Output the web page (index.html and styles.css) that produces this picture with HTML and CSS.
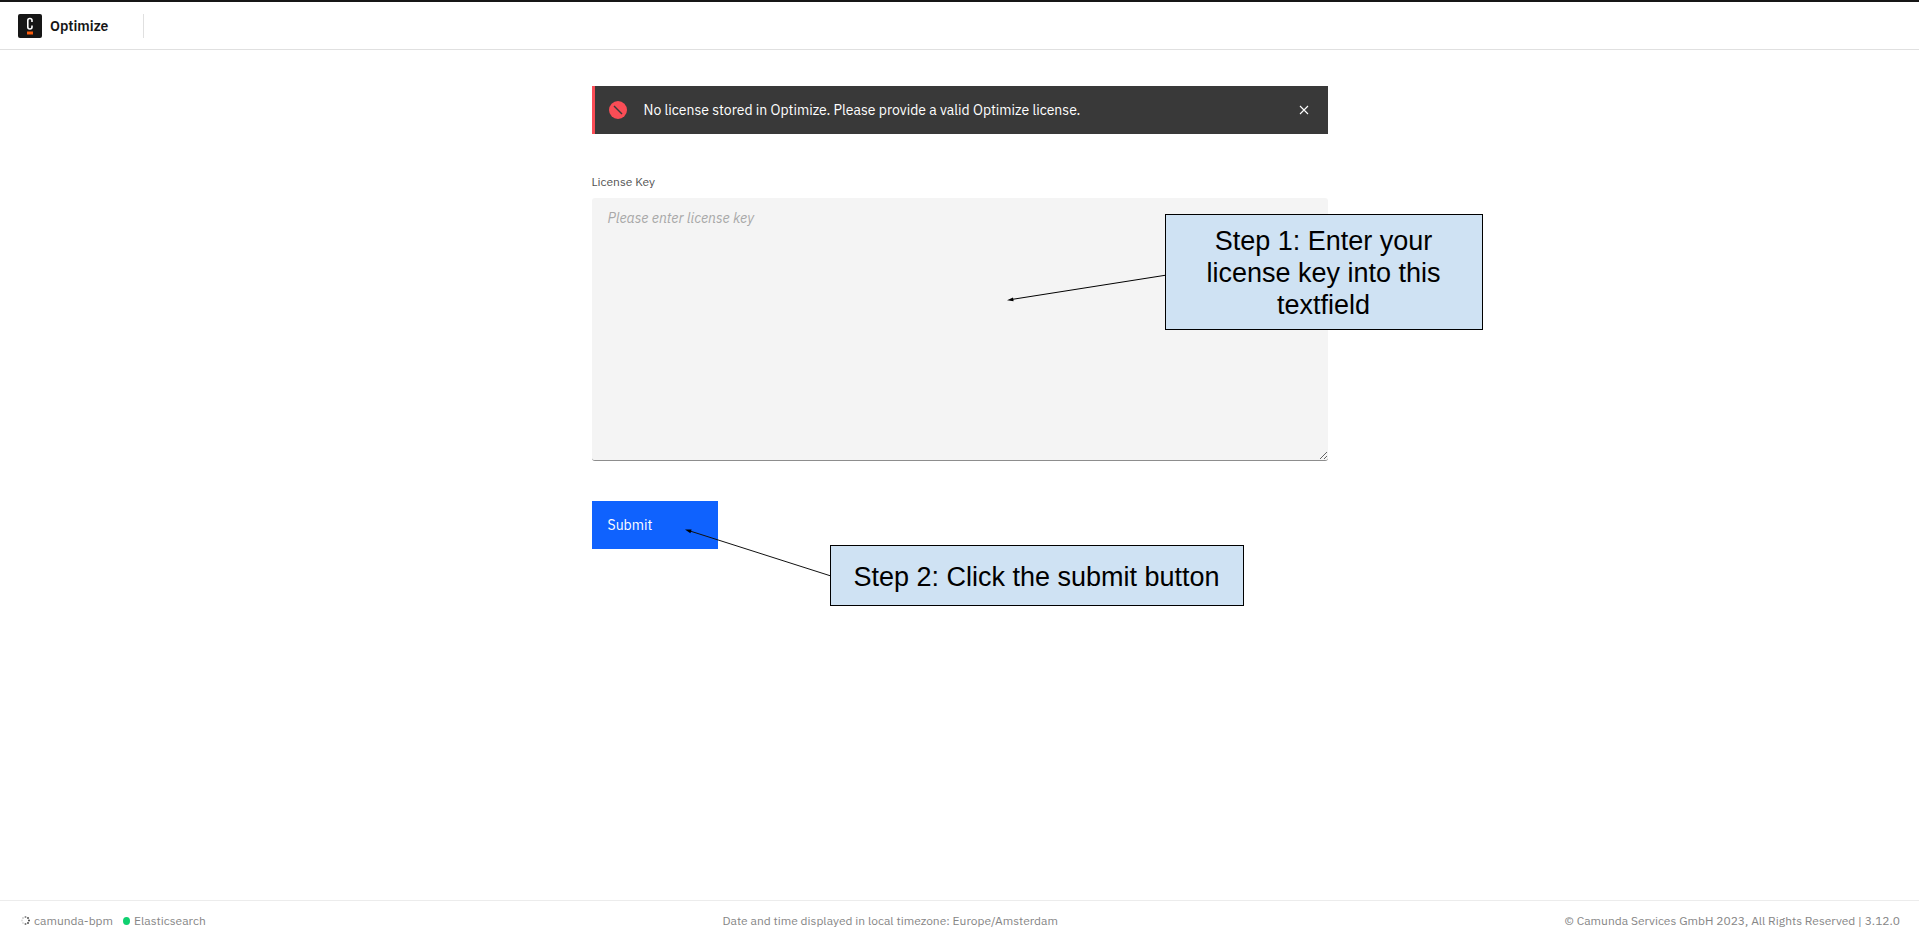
FILE: index.html
```html
<!DOCTYPE html>
<html lang="en">
<head>
<meta charset="utf-8">
<meta name="viewport" content="width=device-width, initial-scale=1">
<title>Optimize</title>
<link rel="stylesheet" href="styles.css">
</head>
<body>
<header class="header">
  <a class="brand" href="#">
    <svg class="brand-logo" viewBox="0 0 24 24" aria-hidden="true">
      <rect width="24" height="24" rx="2" fill="#161616"/>
      <path d="M14 8V6.500a2 2 0 0 0-2-2h-.2a2 2 0 0 0-2 2v6.500a2 2 0 0 0 2 2h.2a2 2 0 0 0 2-2v-1.500" fill="none" stroke="#fff" stroke-width="1.600"/>
      <rect x="9" y="17.500" width="6" height="3" fill="#fc5d0d"/>
    </svg>
    <span>Optimize</span>
  </a>
</header>

<main class="main">
  <div class="license">
    <div class="notification" role="alert">
      <svg class="notification-icon" viewBox="0 0 18 18" aria-hidden="true">
        <circle cx="9" cy="9" r="9" fill="#fa4d56"/>
        <path d="M5 5l8 8" stroke="#393939" stroke-width="1.400"/>
      </svg>
      <p class="notification-text">No license stored in Optimize. Please provide a valid Optimize license.</p>
      <button class="notification-close" type="button" aria-label="Close">
        <svg class="close-icon" viewBox="0 0 10 10" aria-hidden="true">
          <path d="M1 1l8 8M9 1l-8 8" stroke="#fff" stroke-width="1.100"/>
        </svg>
      </button>
    </div>
    <form class="form">
      <label class="label" for="license-key">License Key</label>
      <textarea class="key" id="license-key" placeholder="Please enter license key"></textarea>
      <button class="submit" type="submit">Submit</button>
    </form>

    <svg class="arrow arrow-key" viewBox="0 0 160 28" aria-hidden="true">
      <path d="M160 1L5 25.400" stroke="#000" fill="none"/>
      <path d="M0 26.200L6 23.400L6.600 27.200Z"/>
    </svg>
    <div class="callout callout-key">Step 1: Enter your license key into this textfield</div>
    <svg class="arrow arrow-submit" viewBox="0 0 146 48" aria-hidden="true">
      <path d="M146 47L5 2" stroke="#111" fill="none"/>
      <path d="M0 .400L6.600 .400L5.400 4.200Z"/>
    </svg>
    <div class="callout callout-submit">Step 2: Click the submit button</div>
  </div>
</main>

<footer class="footer">
  <ul class="status">
    <li class="status-item">
      <svg class="spinner" viewBox="0 0 9 9" aria-hidden="true">
        <circle cx="4.500" cy="1" r="1" fill="#888"/>
        <circle cx="7" cy="2" r="1" fill="#555"/>
        <circle cx="8" cy="4.500" r="1" fill="#444"/>
        <circle cx="7" cy="7" r="1" fill="#555"/>
        <circle cx="4.500" cy="8" r="1" fill="#777"/>
        <circle cx="2" cy="7" r="1" fill="#ddd"/>
        <circle cx="1" cy="4.500" r="1" fill="#ddd"/>
        <circle cx="2" cy="2" r="1" fill="#ccc"/>
      </svg>
      <span>camunda-bpm</span>
    </li>
    <li class="status-item"><span class="dot"></span><span>Elasticsearch</span></li>
  </ul>
  <p class="timezone">Date and time displayed in local timezone: Europe/Amsterdam</p>
  <p class="copyright">© Camunda Services GmbH 2023, All Rights Reserved | 3.12.0</p>
</footer>
</body>
</html>
```
FILE: styles.css
```css
* {
  box-sizing: border-box;
}

body {
  display: flex;
  flex-direction: column;
  min-height: 100vh;
  margin: 0;
  border-top: 2px solid #161616;
  background: #fff;
  color: #161616;
  font-family: "IBM Plex Sans", Roboto, sans-serif;
  font-size: 14px;
  line-height: 18px;
}

p,
ul {
  margin: 0;
  padding: 0;
}

.header {
  display: flex;
  align-items: center;
  height: 48px;
  padding: 0 18px;
  border-bottom: 1px solid #e0e0e0;
}

.brand {
  display: flex;
  align-items: center;
  gap: 8px;
  height: 24px;
  padding-right: 35px;
  border-right: 1px solid #e0e0e0;
  color: #161616;
  font-weight: 600;
  text-decoration: none;
}

.brand-logo {
  width: 24px;
  height: 24px;
}

.main {
  flex: 1;
  padding: 36px 16px;
}

.license {
  position: relative;
  max-width: 736px;
  margin: 0 auto;
}

.notification {
  display: flex;
  align-items: center;
  height: 48px;
  padding-left: 14px;
  border-left: 3px solid #fa4d56;
  background: #393939;
  color: #fff;
}

.notification-icon {
  width: 18px;
  height: 18px;
  margin-right: 17px;
}

.notification-text {
  flex: 1;
}

.notification-close {
  display: flex;
  align-items: center;
  justify-content: center;
  width: 48px;
  height: 48px;
  padding: 0;
  border: 0;
  background: none;
}

.close-icon {
  width: 10px;
  height: 10px;
}

.form {
  display: flex;
  flex-direction: column;
  align-items: flex-start;
  margin-top: 40px;
}

.label {
  margin-bottom: 8px;
  color: #525252;
  font-size: 12px;
  line-height: 16px;
}

.key {
  display: block;
  width: 100%;
  height: 263px;
  padding: 11px 16px;
  border: 0;
  border-bottom: 1px solid #8d8d8d;
  border-radius: 3px;
  background: #f4f4f4;
  color: #161616;
  font: inherit;
  resize: both;
}

.key::placeholder {
  color: #a8a8a8;
  font-style: italic;
}

.submit {
  height: 48px;
  margin-top: 40px;
  padding: 0 66px 0 16px;
  border: 0;
  background: #0f62fe;
  color: #fff;
  font: inherit;
}

.callout {
  position: absolute;
  border: 1px solid #000;
  background: #cfe2f3;
  color: #000;
  font-family: "Liberation Sans", Arial, sans-serif;
  font-size: 27px;
  line-height: 32px;
  text-align: center;
}

.callout-key {
  top: 128px;
  left: 573px;
  width: 318px;
  padding: 10px 32px 8px;
}

.callout-submit {
  top: 459px;
  left: 238px;
  width: 414px;
  padding: 15px 16px 12px;
}

.arrow {
  position: absolute;
}

.arrow-key {
  top: 188px;
  left: 415px;
  width: 160px;
  height: 28px;
}

.arrow-submit {
  top: 443px;
  left: 93px;
  width: 146px;
  height: 48px;
}

.footer {
  display: flex;
  align-items: center;
  justify-content: space-between;
  height: 36px;
  padding: 4px 19px 0 21px;
  border-top: 1px solid #ececec;
  color: #868686;
  font-size: 12px;
}

.status {
  display: flex;
  gap: 10px;
  padding-right: 10px;
  list-style: none;
}

.status-item {
  display: flex;
  align-items: center;
  gap: 4px;
}

.spinner {
  width: 9px;
  height: 9px;
}

.dot {
  width: 7px;
  height: 8px;
  border-radius: 50%;
  background: #10d070;
}
```
